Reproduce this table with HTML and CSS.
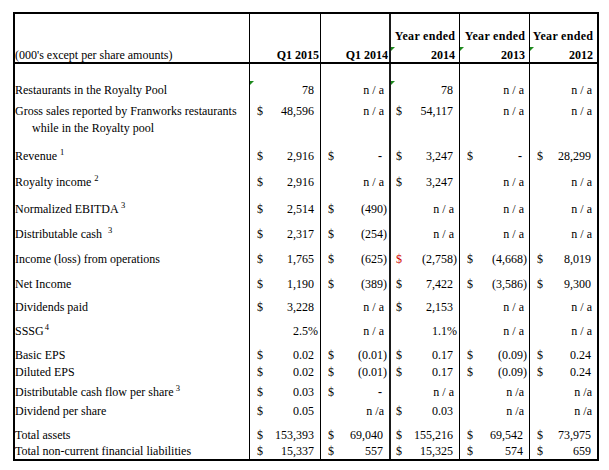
FILE: index.html
```html
<!DOCTYPE html>
<html>
<head>
<meta charset="utf-8">
<title>Financial summary</title>
<link rel="stylesheet" href="styles.css">
</head>
<body>
<div class="sheet">
  <div class="row head">
    <div class="c lbl"><span>(000's except per share amounts)</span></div>
    <div class="c h q15"><span>Q1 2015</span></div>
    <div class="c h"><span>Q1 2014</span></div>
    <div class="c h y"><i class="tri"></i><span class="ye">Year ended</span><span class="l2">2014</span></div>
    <div class="c h y"><i class="tri"></i><span class="ye">Year ended</span><span class="l2">2013</span></div>
    <div class="c h y"><i class="tri"></i><span class="ye">Year ended</span><span class="l2">2012</span></div>
  </div>

  <div class="row r1">
    <div class="c lbl"><span>Restaurants in the Royalty Pool</span></div>
    <div class="c n"><i class="tri"></i><span class="v">78</span></div>
    <div class="c n"><span class="v na">n / a</span></div>
    <div class="c n"><i class="tri"></i><span class="v">78</span></div>
    <div class="c n"><span class="v na">n / a</span></div>
    <div class="c n"><span class="v na">n / a</span></div>
  </div>

  <div class="row r2">
    <div class="c lbl two"><span>Gross sales reported by Franworks restaurants</span><span class="ind">while in the Royalty pool</span></div>
    <div class="c n top"><span class="d">$</span><span class="v">48,596</span></div>
    <div class="c n top"><span class="v na">n / a</span></div>
    <div class="c n top"><span class="d">$</span><span class="v">54,117</span></div>
    <div class="c n top"><span class="v na">n / a</span></div>
    <div class="c n top"><span class="v na">n / a</span></div>
  </div>

  <div class="row r3">
    <div class="c lbl"><span>Revenue <sup class="s">1</sup></span></div>
    <div class="c n"><span class="d">$</span><span class="v">2,916</span></div>
    <div class="c n"><span class="d">$</span><span class="v nil">-</span></div>
    <div class="c n"><span class="d">$</span><span class="v">3,247</span></div>
    <div class="c n"><span class="d">$</span><span class="v nil">-</span></div>
    <div class="c n"><span class="d">$</span><span class="v">28,299</span></div>
  </div>

  <div class="row r4">
    <div class="c lbl"><span>Royalty income <sup class="s">2</sup></span></div>
    <div class="c n"><span class="d">$</span><span class="v">2,916</span></div>
    <div class="c n"><span class="v na">n / a</span></div>
    <div class="c n"><span class="d">$</span><span class="v">3,247</span></div>
    <div class="c n"><span class="v na">n / a</span></div>
    <div class="c n"><span class="v na">n / a</span></div>
  </div>

  <div class="row r5">
    <div class="c lbl"><span>Normalized EBITDA <sup class="s">3</sup></span></div>
    <div class="c n"><span class="d">$</span><span class="v">2,514</span></div>
    <div class="c n"><span class="d">$</span><span class="v neg">(490)</span></div>
    <div class="c n"><span class="v na">n / a</span></div>
    <div class="c n"><span class="v na">n / a</span></div>
    <div class="c n"><span class="v na">n / a</span></div>
  </div>

  <div class="row r6">
    <div class="c lbl"><span>Distributable cash&nbsp; <sup class="s">3</sup></span></div>
    <div class="c n"><span class="d">$</span><span class="v">2,317</span></div>
    <div class="c n"><span class="d">$</span><span class="v neg">(254)</span></div>
    <div class="c n"><span class="v na">n / a</span></div>
    <div class="c n"><span class="v na">n / a</span></div>
    <div class="c n"><span class="v na">n / a</span></div>
  </div>

  <div class="row r7">
    <div class="c lbl"><span>Income (loss) from operations</span></div>
    <div class="c n"><span class="d">$</span><span class="v">1,765</span></div>
    <div class="c n"><span class="d">$</span><span class="v neg">(625)</span></div>
    <div class="c n"><span class="d red">$</span><span class="v neg">(2,758)</span></div>
    <div class="c n"><span class="d">$</span><span class="v neg">(4,668)</span></div>
    <div class="c n"><span class="d">$</span><span class="v">8,019</span></div>
  </div>

  <div class="row r8">
    <div class="c lbl"><span>Net Income</span></div>
    <div class="c n"><span class="d">$</span><span class="v">1,190</span></div>
    <div class="c n"><span class="d">$</span><span class="v neg">(389)</span></div>
    <div class="c n"><span class="d">$</span><span class="v">7,422</span></div>
    <div class="c n"><span class="d">$</span><span class="v neg">(3,586)</span></div>
    <div class="c n"><span class="d">$</span><span class="v">9,300</span></div>
  </div>

  <div class="row r9">
    <div class="c lbl"><span>Dividends paid</span></div>
    <div class="c n"><span class="d">$</span><span class="v">3,228</span></div>
    <div class="c n"><span class="v na">n / a</span></div>
    <div class="c n"><span class="d">$</span><span class="v">2,153</span></div>
    <div class="c n"><span class="v na">n / a</span></div>
    <div class="c n"><span class="v na">n / a</span></div>
  </div>

  <div class="row r10">
    <div class="c lbl"><span>SSSG<sup class="s tight">4</sup></span></div>
    <div class="c n"><span class="v pct">2.5%</span></div>
    <div class="c n"><span class="v na">n / a</span></div>
    <div class="c n"><span class="v pct">1.1%</span></div>
    <div class="c n"><span class="v na">n / a</span></div>
    <div class="c n"><span class="v na">n / a</span></div>
  </div>

  <div class="row r11">
    <div class="c lbl"><span>Basic EPS</span></div>
    <div class="c n"><span class="d">$</span><span class="v">0.02</span></div>
    <div class="c n"><span class="d">$</span><span class="v neg">(0.01)</span></div>
    <div class="c n"><span class="d">$</span><span class="v">0.17</span></div>
    <div class="c n"><span class="d">$</span><span class="v neg">(0.09)</span></div>
    <div class="c n"><span class="d">$</span><span class="v">0.24</span></div>
  </div>

  <div class="row r12">
    <div class="c lbl"><span>Diluted EPS</span></div>
    <div class="c n"><span class="d">$</span><span class="v">0.02</span></div>
    <div class="c n"><span class="d">$</span><span class="v neg">(0.01)</span></div>
    <div class="c n"><span class="d">$</span><span class="v">0.17</span></div>
    <div class="c n"><span class="d">$</span><span class="v neg">(0.09)</span></div>
    <div class="c n"><span class="d">$</span><span class="v">0.24</span></div>
  </div>

  <div class="row r13">
    <div class="c lbl"><span>Distributable cash flow per share<sup class="s tight2">3</sup></span></div>
    <div class="c n"><span class="d">$</span><span class="v">0.03</span></div>
    <div class="c n"><span class="d">$</span><span class="v nil">-</span></div>
    <div class="c n"><span class="v na">n / a</span></div>
    <div class="c n"><span class="v na">n /a</span></div>
    <div class="c n"><span class="v na">n /a</span></div>
  </div>

  <div class="row r14">
    <div class="c lbl"><span>Dividend per share</span></div>
    <div class="c n"><span class="d">$</span><span class="v">0.05</span></div>
    <div class="c n"><span class="v na">n /a</span></div>
    <div class="c n"><span class="d">$</span><span class="v">0.03</span></div>
    <div class="c n"><span class="v na">n /a</span></div>
    <div class="c n"><span class="v na">n /a</span></div>
  </div>

  <div class="row r15">
    <div class="c lbl"><span>Total assets</span></div>
    <div class="c n"><span class="d">$</span><span class="v">153,393</span></div>
    <div class="c n"><span class="d">$</span><span class="v">69,040</span></div>
    <div class="c n near"><span class="d">$</span><span class="v">155,216</span></div>
    <div class="c n"><span class="d">$</span><span class="v">69,542</span></div>
    <div class="c n"><span class="d">$</span><span class="v">73,975</span></div>
  </div>

  <div class="row r16">
    <div class="c lbl"><span>Total non-current financial liabilities</span></div>
    <div class="c n"><span class="d">$</span><span class="v">15,337</span></div>
    <div class="c n"><span class="d">$</span><span class="v">557</span></div>
    <div class="c n near"><span class="d">$</span><span class="v">15,325</span></div>
    <div class="c n"><span class="d">$</span><span class="v">574</span></div>
    <div class="c n"><span class="d">$</span><span class="v">659</span></div>
  </div>
</div>
</body>
</html>
```

FILE: styles.css
```css
body {
  margin: 0;
  background: #fff;
  color: #000;
  font-family: "Liberation Serif", "Times New Roman", serif;
  font-size: 12px;
}

.sheet {
  margin: 12px 0 0 13px;
  width: 586px;
  box-sizing: border-box;
  border: 2px solid #000;
}

.row {
  display: grid;
  grid-template-columns: 235px 71px 70px 69px 70px 67px;
}

.c {
  position: relative;
  display: flex;
  align-items: flex-end;
  box-sizing: border-box;
  border-right: 1px solid #000;
  line-height: 16px;
  white-space: nowrap;
}

.c:nth-child(3) {
  border-right: 2px solid #1a1a1a;
}

.c:last-child {
  border-right: none;
}

/* header */
.head {
  height: 50px;
  border-bottom: 2px solid #000;
  box-sizing: border-box;
}

.head .c {
  flex-direction: column;
  justify-content: flex-end;
  line-height: 14px;
}

.head .lbl {
  align-items: flex-start;
}

.h {
  align-items: flex-end;
  font-weight: bold;
  padding-right: 4px;
}

.head .c:nth-child(2),
.head .c:nth-child(3) {
  padding-right: 1px;
}

.h .ye {
  letter-spacing: 0.3px;
  margin-right: -0.3px;
}

.h .l2 {
  margin-top: 5px;
}

/* rows */
.r1 { height: 34px; }
.r2 { height: 39px; }
.r3 { height: 27px; }
.r4 { height: 26px; }
.r5 { height: 27px; }
.r6 { height: 25px; }
.r7 { height: 25px; }
.r8 { height: 25px; }
.r9 { height: 23px; }
.r10 { height: 24px; }
.r11 { height: 24px; }
.r12 { height: 17px; }
.r13 { height: 20px; }
.r14 { height: 19px; }
.r15 { height: 24px; }
.r16 { height: 16px; }

.lbl {
  padding-left: 0;
}

.two {
  flex-direction: column;
  align-items: flex-start;
  justify-content: flex-end;
  line-height: 17px;
}

.two .ind {
  padding-left: 17px;
}

.top {
  line-height: 17px;
  padding-bottom: 17px !important;
}

.s {
  font-size: 8.5px;
  line-height: 0;
  vertical-align: 5.5px;
}

.s.tight {
  margin-left: 1px;
}

.s.tight2 {
  margin-left: 2px;
}

/* numeric cells */
.n {
  padding: 0 6px 0 7px;
}

.row .c:nth-child(4).n {
  padding-left: 5px;
}

.row .c.near {
  padding-left: 3px;
}

.n .v {
  margin-left: auto;
}

.neg,
.pct {
  margin-right: -4px;
}

.na {
  margin-right: -1px;
}

.nil {
  font-weight: bold;
  margin-right: 1px;
}

.red {
  color: #d00000;
}

/* Excel green error-indicator triangles */
.tri {
  position: absolute;
  left: 0;
  top: 17px;
  width: 0;
  height: 0;
  border-top: 4px solid #1e8a1e;
  border-right: 4px solid transparent;
}

.head .tri {
  top: 33px;
}
```
